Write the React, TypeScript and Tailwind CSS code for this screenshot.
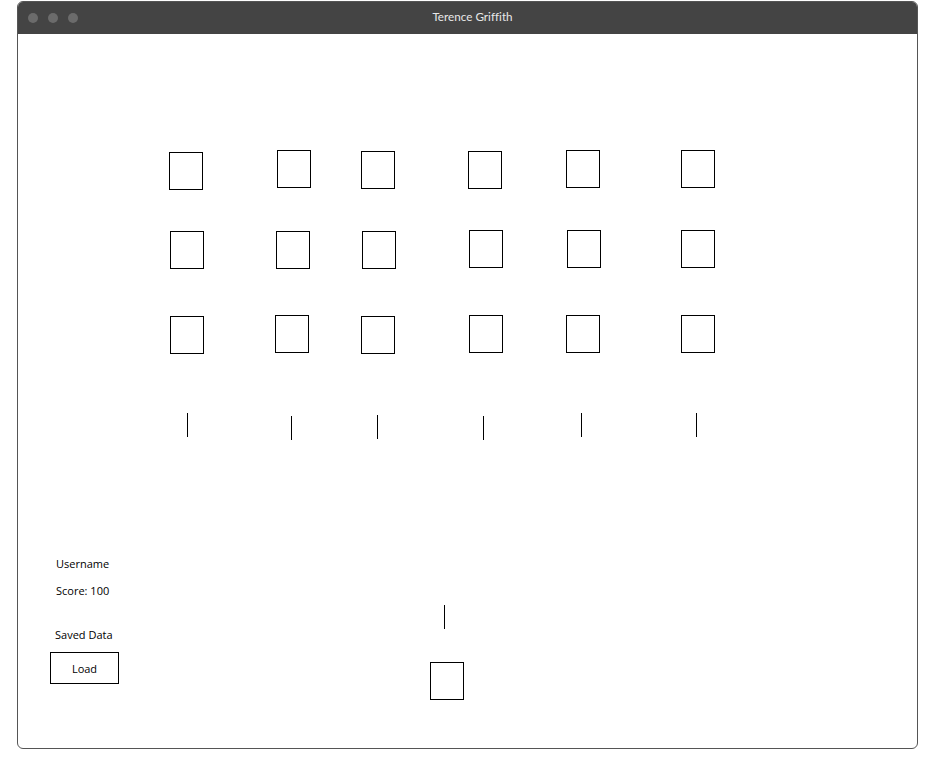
import React from 'react';

type Pos = { x: number; y: number };

// invader positions on the playfield (relative to the canvas top-left)
const invaders: Pos[] = [
  { x: 151, y: 118 }, { x: 259, y: 116 }, { x: 343, y: 117 }, { x: 450, y: 117 }, { x: 548, y: 116 }, { x: 663, y: 116 },
  { x: 152, y: 197 }, { x: 258, y: 197 }, { x: 344, y: 197 }, { x: 451, y: 196 }, { x: 549, y: 196 }, { x: 663, y: 196 },
  { x: 152, y: 282 }, { x: 257, y: 281 }, { x: 343, y: 282 }, { x: 451, y: 281 }, { x: 548, y: 281 }, { x: 663, y: 281 },
];

const enemyShots: Pos[] = [
  { x: 169, y: 379 }, { x: 273, y: 382 }, { x: 359, y: 381 }, { x: 465, y: 382 }, { x: 563, y: 379 }, { x: 678, y: 379 },
];

const playerShot: Pos = { x: 426, y: 571 };
const player: Pos = { x: 412, y: 628 };

const Sprite: React.FC<{ pos: Pos }> = ({ pos }) => (
  <div
    className="absolute w-[34px] h-[38px] border border-black bg-white"
    style={{ left: pos.x, top: pos.y }}
  />
);

const Shot: React.FC<{ pos: Pos }> = ({ pos }) => (
  <div className="absolute w-px h-[24px] bg-black" style={{ left: pos.x, top: pos.y }} />
);

export default function App() {
  return (
    <div className="min-h-screen bg-white pt-px pl-[17px] font-['Open_Sans',_'Liberation_Sans',_sans-serif]">
      <div className="w-[901px] h-[748px] border border-[#555] rounded-[6px] overflow-hidden flex flex-col">
        {/* Title bar */}
        <div className="h-[32px] bg-[#444] flex items-center relative shrink-0">
          <div className="flex gap-[10px] pl-[10px]">
            <span className="w-[10px] h-[10px] rounded-full bg-[#6b6b6b]" />
            <span className="w-[10px] h-[10px] rounded-full bg-[#6b6b6b]" />
            <span className="w-[10px] h-[10px] rounded-full bg-[#6b6b6b]" />
          </div>
          <div className="absolute inset-0 flex items-center justify-center pb-[2px] pl-[10px] font-['Lato',_sans-serif] text-[11.7px] text-[#e8e8e8] [font-variant-ligatures:none]">
            Terence Griffith
          </div>
        </div>

        {/* Game canvas */}
        <div className="relative flex-1 flex flex-col justify-end pl-[32px] pb-[64px] text-[11px] leading-[15px] text-black">
          {invaders.map((p, i) => (
            <Sprite key={i} pos={p} />
          ))}
          {enemyShots.map((p, i) => (
            <Shot key={i} pos={p} />
          ))}
          <Shot pos={playerShot} />
          <Sprite pos={player} />

          {/* HUD */}
          <div className="flex flex-col items-start">
            <span className="ml-[6px]">Username</span>
            <span className="ml-[6px] mt-[12px]">Score: 100</span>
            <span className="ml-[5px] mt-[29px]">Saved Data</span>
            <button className="mt-[10px] w-[69px] h-[32px] border border-black bg-white flex items-center justify-center">
              Load
            </button>
          </div>
        </div>
      </div>
    </div>
  );
}
